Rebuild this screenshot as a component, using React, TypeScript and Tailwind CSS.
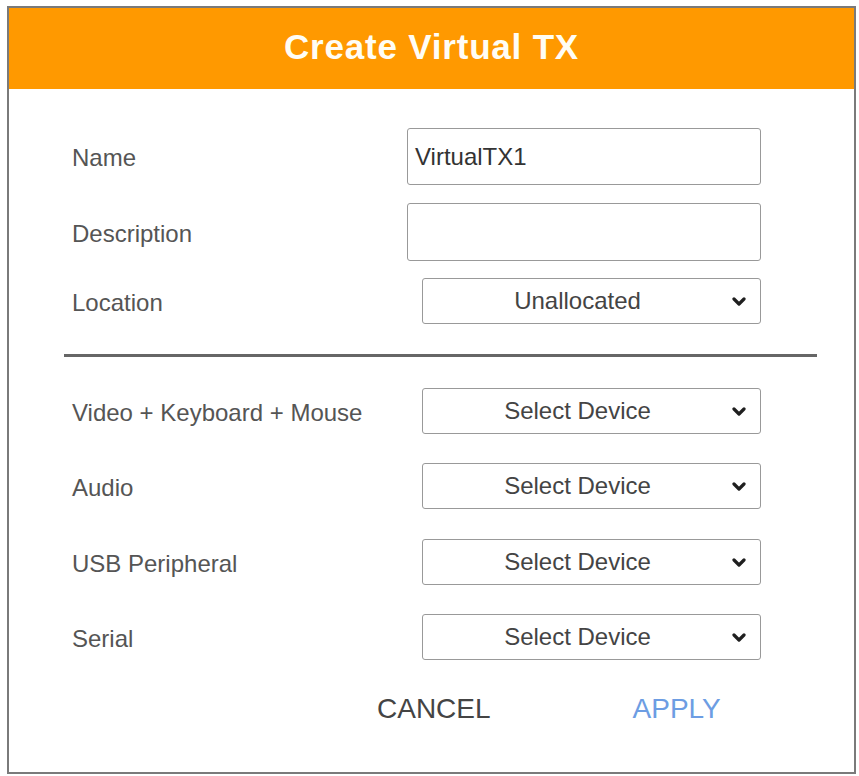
import React from 'react'

const font = { fontFamily: '"Liberation Sans", Arial, sans-serif' }

function Chevron() {
  return (
    <svg width="14" height="9" viewBox="0 0 14 9" className="mr-[14px] shrink-0">
      <path d="M2 2 L7 7 L12 2" fill="none" stroke="#1f1f1f" strokeWidth="3.2" strokeLinecap="round" strokeLinejoin="round" />
    </svg>
  )
}

function SelectBox({ value }: { value: string }) {
  return (
    <div className="w-[339px] h-[46px] border border-[#999] rounded-[3px] bg-white flex items-center">
      <span className="flex-1 text-center text-[24px] text-[#444]">{value}</span>
      <Chevron />
    </div>
  )
}

function Row({ label, children, className }: { label: string; children: React.ReactNode; className?: string }) {
  return (
    <div className={`flex items-center justify-between pl-[63px] pr-[93px] ${className ?? ''}`}>
      <span className="text-[24px] text-[#555] pt-[3px]">{label}</span>
      {children}
    </div>
  )
}

export default function App() {
  return (
    <div className="min-h-[776px] bg-white pt-[6px]" style={font}>
      <div className="ml-[7px] w-[849px] border-2 border-[#7a7a7a] bg-white">
        <div className="h-[81px] bg-[#ff9900] flex items-center justify-center">
          <h1 className="text-[35px] font-bold text-[#fffdf5] tracking-[0.8px] pb-[3px]">Create Virtual TX</h1>
        </div>

        <Row label="Name" className="mt-[39px] h-[57px]">
          <div className="w-[354px] h-[57px] border border-[#999] rounded-[3px] flex items-center pl-[7px] text-[24px] text-[#333]">
            VirtualTX1
          </div>
        </Row>
        <Row label="Description" className="mt-[18px] h-[58px]">
          <div className="w-[354px] h-[58px] border border-[#999] rounded-[3px]" />
        </Row>
        <Row label="Location" className="mt-[17px] h-[46px]">
          <SelectBox value="Unallocated" />
        </Row>

        <div className="mt-[30px] ml-[55px] mr-[37px] h-[3px] bg-[#666]" />

        <Row label="Video + Keyboard + Mouse" className="mt-[31px] h-[46px]">
          <SelectBox value="Select Device" />
        </Row>
        <Row label="Audio" className="mt-[29px] h-[46px]">
          <SelectBox value="Select Device" />
        </Row>
        <Row label="USB Peripheral" className="mt-[30px] h-[46px]">
          <SelectBox value="Select Device" />
        </Row>
        <Row label="Serial" className="mt-[29px] h-[46px]">
          <SelectBox value="Select Device" />
        </Row>

        <div className="mt-[29px] h-[40px] flex items-center pl-[368px] pb-[43px] box-content">
          <button className="text-[28px] text-[#444] leading-none">CANCEL</button>
          <button className="ml-[142px] text-[28px] text-[#6d9de3] leading-none">APPLY</button>
        </div>
      </div>
    </div>
  )
}
